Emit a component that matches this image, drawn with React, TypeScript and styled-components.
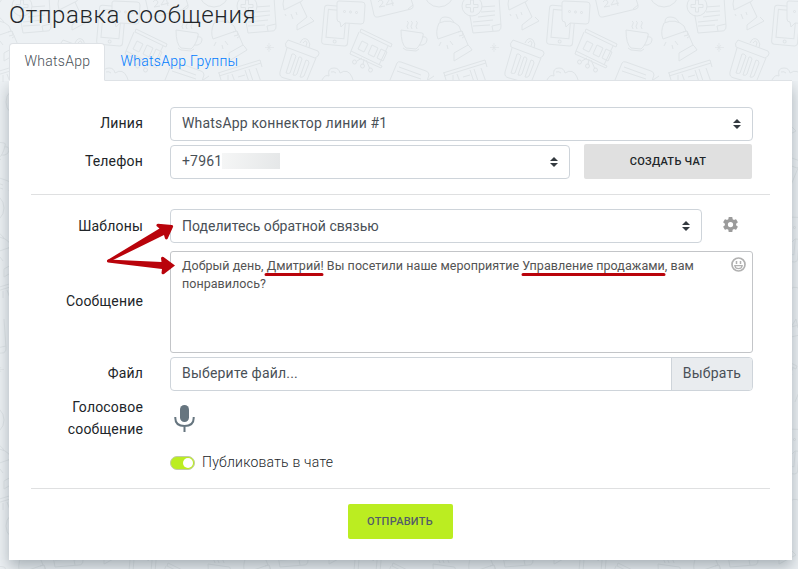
import React from 'react';
import styled, { createGlobalStyle, css } from 'styled-components';

const GlobalStyle = createGlobalStyle`
  *, *::before, *::after { box-sizing: border-box; }
  html, body { height: 100%; overflow: hidden; }
  body {
    margin: 0;
    background: #edf1f4;
    font-family: Roboto, 'Open Sans', sans-serif;
    font-size: 14px;
    letter-spacing: 0.18px;
    color: #212529;
  }
  button { font-family: inherit; margin: 0; }
`;

const Page = styled.main`
  position: relative;
  isolation: isolate;
  width: 798px;
  height: 569px;
  padding: 0 6px 0 9px;
  overflow: hidden;
`;

const Backdrop = styled.svg`
  position: absolute;
  inset: 0;
  z-index: -1;
`;

const Title = styled.h1`
  margin: 0;
  height: 43px;
  font-size: 24px;
  line-height: 30px;
  font-weight: 300;
  letter-spacing: 0.62px;
`;

const Tabs = styled.nav`
  display: flex;
  height: 38px;
  border-bottom: 1px solid #dee2e6;
`;

const Tab = styled.a<{ $active?: boolean }>`
  height: 38px;
  padding: 0 14.5px;
  border: 1px solid transparent;
  border-radius: 4px 4px 0 0;
  line-height: 35px;
  font-weight: 300;
  letter-spacing: 0.26px;
  color: #007bff;
  ${p => p.$active && css`
    width: 96px;
    color: #495057;
    background: #fff;
    border-color: #dee2e6 #dee2e6 #fff;
  `}
`;

const Card = styled.form`
  display: flex;
  flex-direction: column;
  height: 479px;
  padding: 26px 22px 0;
  background: #fff;
  box-shadow: 0 7px 14px rgba(70, 85, 95, 0.4);
  clip-path: inset(0 -20px -20px -20px);
`;

const Row = styled.div<{ $h: number; $gap?: number }>`
  display: grid;
  grid-template-columns: 112px 583px;
  column-gap: 27px;
  align-items: center;
  height: ${p => p.$h}px;
  margin-bottom: ${p => p.$gap ?? 0}px;
`;

const Label = styled.label<{ $lift?: number }>`
  padding-bottom: ${p => p.$lift ?? 2}px;
  text-align: right;
  line-height: 22px;
`;

const Controls = styled.div`
  display: flex;
  align-items: center;
`;

const SelectBox = styled.div<{ $w: number }>`
  display: flex;
  align-items: center;
  width: ${p => p.$w}px;
  height: 34px;
  padding: 0 11px;
  border: 1px solid #ced4da;
  border-radius: 4px;
  line-height: 32px;
  color: #495057;
  background: #fff;
`;

const SelectValue = styled.span<{ $tight?: boolean }>`
  padding-bottom: ${p => (p.$tight ? 0 : 2)}px;
  letter-spacing: ${p => (p.$tight ? 0.03 : 0.18)}px;
`;

const Caret = styled.svg`
  margin: 0 0 0 auto;
`;

const Redacted = styled.span`
  width: 58px;
  height: 16px;
  margin: -1px 0 0;
  background: linear-gradient(100deg, #f5f6f6, #e5e7e8);
`;

const Button = styled.button<{ $primary?: boolean }>`
  width: ${p => (p.$primary ? 105 : 168)}px;
  height: 35px;
  padding: 0;
  border: 0;
  border-radius: 2px;
  font-size: 11px;
  font-weight: 500;
  letter-spacing: 0.25px;
  color: ${p => (p.$primary ? '#535c69' : '#212529')};
  background: ${p => (p.$primary ? '#bbed21' : '#e0e0e0')};
`;

const CreateChat = styled(Button)`
  margin-left: 14px;
`;

const Settings = styled.svg`
  margin: -4px 0 0 20.5px;
`;

const Divider = styled.hr<{ $gap?: number }>`
  flex: none;
  width: 739px;
  height: 1px;
  margin: 0 0 ${p => p.$gap ?? 0}px;
  border: 0;
  background: #dfe0e1;
`;

const MessageBox = styled.div`
  display: flex;
  justify-content: space-between;
  height: 102px;
  padding: 5px 6px 0 11px;
  border: 1px solid #c3c5c8;
  border-radius: 3px;
  font-size: 12.5px;
  line-height: 18px;
  letter-spacing: 0.05px;
  color: #535353;
`;

const MessageText = styled.p`
  margin: 0;
  width: 530px;
`;

const FileBox = styled.div`
  display: flex;
  height: 34px;
  border: 1px solid #ced4da;
  border-radius: 4px;
  overflow: hidden;
  line-height: 31px;
  letter-spacing: 0.2px;
  color: #495057;
`;

const FileName = styled.span`
  flex: 1;
  padding-left: 11px;
`;

const Browse = styled.span`
  width: 81px;
  border-left: 1px solid #ced4da;
  text-align: center;
  background: #e9ecef;
`;

const Microphone = styled.svg`
  margin-top: -2px;
`;

const Toggle = styled.span`
  display: flex;
  justify-content: flex-end;
  width: 25px;
  height: 14px;
  padding: 1px;
  margin: 2px 7px 0 0;
  border: 1px solid #c2cba4;
  border-radius: 7px;
  background: #bbed21;
  &::after {
    content: '';
    width: 10px;
    height: 10px;
    border-radius: 50%;
    background: #fff;
  }
`;

const ToggleText = styled.span`
  font-weight: 300;
  letter-spacing: 0.22px;
`;

const Footer = styled.footer`
  display: flex;
  justify-content: center;
  padding-top: 15px;
  margin-right: 1px;
`;

const Annotations = styled.svg`
  position: absolute;
  inset: 0;
  pointer-events: none;
`;

const Arrows = () => (
  <Caret width="8" height="10" viewBox="0 0 8 10" fill="#343a40">
    <path d="M4 0 8 4H0zM4 10 0 6h8z" />
  </Caret>
);

const Doodles = () => (
  <Backdrop width="798" height="569" fill="none" stroke="#dfe4e7" strokeWidth="1">
    <defs>
      <g id="doodles">
        <g transform="rotate(5 75 26)">
          <rect x="63" y="6" width="26" height="39" rx="3" />
          <rect x="67" y="10" width="18" height="28" />
          <circle cx="76" cy="41.500" r="1.500" />
        </g>
        <path fill="#edf1f4" d="M79 1 102 2q3 0 3 3l-1 16q0 3-3 3l-16-1-4 4-1-5q-3 0-3-3l0-16q0-2 2-2z" />
        <g><circle cx="84.500" cy="11.500" r="1" /><circle cx="90.500" cy="12" r="1" /><circle cx="96.500" cy="12.500" r="1" /></g>
        <path d="M110-3l4 18q1 3 4 2l33-8q3-1 2-4l-3-9M118 2q3-4 5 0 0 2-4 5l6-1M133 6l-2-9-5 8 8-2M148 9l5-4" />
        <circle cx="179" cy="-8" r="15" />
        <path d="M174-5q5 4 10-1" />
        <path d="M210 16l3 17 24-2q4 0 4-5l-2-29M213 22l20-2M213 26l17-1M218 17l17-2M221 12l14-1M220 7l15-1M233 31l-1-5 9-2" />
        <circle cx="212" cy="6" r="10" fill="#edf1f4" />
        <path d="M210.500 0h3v4.500h4.500v3h-4.500v4.500h-3v-4.500h-4.500v-3h4.500z" />
        <path d="M24-2q-2 6 0 12l18-9q3-3 0-6M40 2l7 15-10 8v5l17-9-4-4M25 14l1 2M31 14l2 5M36 12l1 3" />
        <path d="M9 43v9M5 47.500h9M7 45l4 5M11 45l-4 5" strokeWidth=".7" />
        <path d="M28 40 58 51q2 2 0 5l-3 2-29-11q-2-3 2-7zM27 48l-7 24q-1 5 4 6l18 5q4 0 5-3l9-22M32 54l-6 19q3 1 4 0l6-17q-2-3-4-2zM39 57l-6 18q3 1 4-1l5-15q-1-3-3-2zM46 60l-6 17q2 1 4-1l5-13q0-3-3-3zM40 43q3-7 8-3 3 4 1 8M43 43q3-4 4 0l-1 3" />
        <path d="M101 29 132 44l-1 3-31-15zM91 51l31 15-1 2-31-14zM99 32l-8 19M128 46l-9 19M102 41l6 3-4 8-6-3zM112 45l6 3-4 9-6-3zM121 49l6 3-4 9-6-3zM102 58l-5 3M106 60l4 9M104 59l-1 6" />
        <circle cx="94.500" cy="62" r="2" /><circle cx="102.500" cy="66" r="2" /><circle cx="110.500" cy="70" r="2" />
        <path d="M141 30l21 3q2 0 1 3-2 9-7 13l-10-1q-5-4-5-18zM162 37q5-1 5 3-1 6-8 5M143 48l3 2 10 1 3-2M148 29q-2-3 0-5 1-2-1-3M152 29q-2-3 0-5 1-2-1-3M157 29q-2-3 0-5 1-2-1-3" />
        <path d="M178 39q-3-7 1-16 12-5 20 3l2 5zM180 22q0-5 5-5 7 0 9 6M198 32l4-1 6 14M202 31l1 4-4 1M208 45l-14 8v8l18-11-2-3zM179 46l2-4M188 49l-1-4M190 41l3 4M205 36l-3 2" />
        <path d="M62 80q3-6 7-4-2-8 5-8 5 0 6 5 8-5 12 4l1 3M71 72q3-1 5 1" />
        <path d="M130 80l7-17q1-2 4-1l25 9q3 1 3 4l-2 6M139 67l22 8M137 71l24 8M168 80l6-4" />
        <path d="M183 73l42-13 2 7M184 76l42-13M184 73l2 7M193 75v7M197 74l3 8M210 70l4 12M214 69l4 12M203 77l7-2M221 68l5 14" />
      </g>
      <g id="doodleRow">
        <use href="#doodles" x="-190" /><use href="#doodles" x="35" />
        <use href="#doodles" x="260" /><use href="#doodles" x="485" /><use href="#doodles" x="710" />
      </g>
    </defs>
    <use href="#doodleRow" />
    <use href="#doodleRow" x="32" y="110" />
    <use href="#doodleRow" y="216" />
    <use href="#doodleRow" x="-45" y="322" />
    <use href="#doodleRow" y="428" />
    <use href="#doodleRow" x="32" y="534" />
  </Backdrop>
);

export default function App() {
  return (
    <Page>
      <GlobalStyle />
      <Doodles />
      <Title>Отправка сообщения</Title>
      <Tabs>
        <Tab $active>WhatsApp</Tab>
        <Tab>WhatsApp Группы</Tab>
      </Tabs>
      <Card>
        <Row $h={34} $gap={3}>
          <Label>Линия</Label>
          <SelectBox $w={583}><SelectValue>WhatsApp коннектор линии #1</SelectValue><Arrows /></SelectBox>
        </Row>
        <Row $h={35} $gap={15}>
          <Label $lift={1}>Телефон</Label>
          <Controls>
            <SelectBox $w={400}><SelectValue>+7961</SelectValue><Redacted /><Arrows /></SelectBox>
            <CreateChat type="button">СОЗДАТЬ ЧАТ</CreateChat>
          </Controls>
        </Row>
        <Divider $gap={14} />
        <Row $h={34} $gap={8}>
          <Label $lift={0}>Шаблоны</Label>
          <Controls>
            <SelectBox $w={532}><SelectValue $tight>Поделитесь обратной связью</SelectValue><Arrows /></SelectBox>
            <Settings width="15" height="15" viewBox="2 2 20 20" fill="#9b9b9b">
              <path d="M19.430 12.980c.04-.32.07-.64.07-.98s-.03-.66-.07-.98l2.110-1.650a.5.5 0 0 0 .12-.64l-2-3.460a.5.5 0 0 0-.61-.22l-2.490 1a7.300 7.300 0 0 0-1.690-.98l-.38-2.650A.49.490 0 0 0 14 2h-4a.49.490 0 0 0-.49.420l-.38 2.650c-.61.250-1.170.590-1.690.98l-2.490-1a.49.490 0 0 0-.61.220l-2 3.460a.5.5 0 0 0 .12.640l2.110 1.650a7.900 7.900 0 0 0 0 1.960l-2.110 1.650a.5.5 0 0 0-.12.640l2 3.460c.12.220.39.300.61.220l2.490-1c.52.400 1.080.73 1.690.98l.38 2.650c.03.240.24.420.49.420h4c.25 0 .46-.18.49-.42l.38-2.650a7.300 7.300 0 0 0 1.690-.98l2.490 1c.23.09.49 0 .61-.22l2-3.460a.5.5 0 0 0-.12-.64zM12 15.500a3.500 3.500 0 1 1 0-7 3.500 3.500 0 0 1 0 7z" />
            </Settings>
          </Controls>
        </Row>
        <Row $h={102} $gap={4}>
          <Label>Сообщение</Label>
          <MessageBox>
            <MessageText>Добрый день, Дмитрий! Вы посетили наше мероприятие Управление продажами, вам<br />понравилось?</MessageText>
            <svg width="15" height="15" viewBox="0 0 15 15" fill="none" stroke="#b1b1b1" strokeWidth="1.700">
              <circle cx="7.500" cy="7.500" r="6.500" />
              <path d="M5.500 4v3M9.500 4v3" strokeWidth="1.500" />
              <path d="M3.800 8.700h7.400q-.5 3-3.700 3t-3.700-3z" strokeWidth="1.200" />
            </svg>
          </MessageBox>
        </Row>
        <Row $h={34} $gap={5}>
          <Label>Файл</Label>
          <FileBox><FileName>Выберите файл...</FileName><Browse>Выбрать</Browse></FileBox>
        </Row>
        <Row $h={44} $gap={4}>
          <Label>Голосовое сообщение</Label>
          <Microphone width="30" height="28" viewBox="0 0 30 28">
            <rect x="10" y="1" width="9" height="17" rx="4.500" fill="#66757f" />
            <path d="M5.300 13v1q0 8 9.200 8t9.200-8v-1M14.500 22v6" fill="none" stroke="#66757f" strokeWidth="2" />
          </Microphone>
        </Row>
        <Row $h={36} $gap={8}>
          <span />
          <Controls><Toggle /><ToggleText>Публиковать в чате</ToggleText></Controls>
        </Row>
        <Divider />
        <Footer><Button type="button" $primary>ОТПРАВИТЬ</Button></Footer>
      </Card>
      <Annotations width="798" height="569" fill="#b9030b">
        <path d="M107.500 260 159.500 228.500 156.500 226q-.5-2 1.500-2.300l14 1.300q1.500.5 1 2l-5.500 12q-1.500 1-2.500-.5l-1-3.500-55 27q-3 0-1.500-2z" />
        <path d="M108 259.500 161.500 262 161 258q1-2 2.500-1l11.500 8.500-11 8.500q-2 1-2.500-1l.5-4-54-6.500q-2-1 0-3z" />
        <path d="M266 274.500h56M523 274.500h141" stroke="#b9030b" strokeWidth="3" strokeLinecap="round" />
      </Annotations>
    </Page>
  );
}
